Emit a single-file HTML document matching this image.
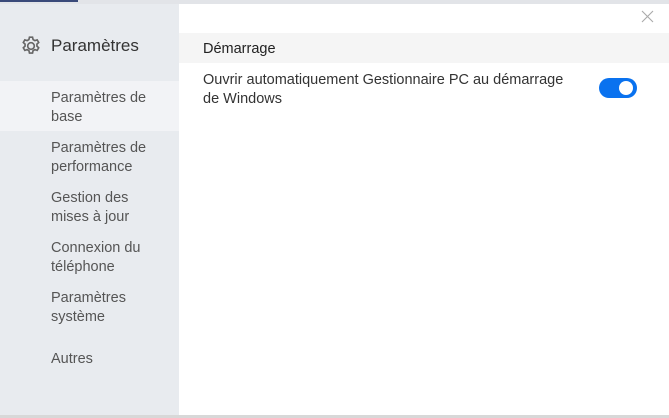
<!DOCTYPE html>
<html><head><meta charset="utf-8"><style>
*{margin:0;padding:0;box-sizing:border-box}
body{width:669px;height:418px;overflow:hidden;background:#fff;font-family:"Liberation Sans","DejaVu Sans",sans-serif;position:relative}
.top{position:absolute;left:0;top:0;width:669px;height:4px;background:#e2e4e8}
.top i{position:absolute;left:0;top:0;width:78px;height:2px;background:#3a4a7a}
.bot{position:absolute;left:0;top:415px;width:669px;height:3px;background:#d8d8d8}
.side{position:absolute;left:0;top:4px;width:179px;height:411px;background:#e8ebef}
.title{position:absolute;left:51px;top:36px;font-size:17px;color:#333}
.gear{position:absolute;left:20px;top:35px}
.item{position:absolute;left:51px;font-size:14.5px;line-height:19px;color:#555;white-space:nowrap}
.act{position:absolute;left:0;top:81px;width:179px;height:50px;background:#f2f3f6}
.hdr{position:absolute;left:179px;top:33px;width:490px;height:30px;background:#f5f5f5}
.hdr span{position:absolute;left:24px;top:8px;font-size:14.5px;color:#222}
.txt{position:absolute;left:203px;top:71px;font-size:14.5px;line-height:19px;color:#333;white-space:nowrap}
.tog{position:absolute;left:599px;top:78px;width:38px;height:20px;border-radius:10px;background:#0a72ef}
.tog i{position:absolute;right:4px;top:3px;width:14px;height:14px;border-radius:50%;background:#fff}
.x{position:absolute;left:641px;top:10px}
</style></head><body>
<div class="top"><i></i></div>
<div class="side"></div>
<div class="act"></div>
<svg class="gear" width="22" height="22" viewBox="0 0 20 20"><g fill="none" stroke="#666" stroke-width="1.5"><circle cx="10" cy="10" r="3"/><path d="M8.6 2h2.8l.5 2.2 1.6.9 2.1-.7 1.4 2.4-1.6 1.5v1.8l1.6 1.5-1.4 2.4-2.1-.7-1.6.9-.5 2.2H8.6l-.5-2.2-1.6-.9-2.1.7-1.4-2.4 1.6-1.5V8.3L3 6.8l1.4-2.4 2.1.7 1.6-.9z"/></g></svg>
<div class="title">Paramètres</div>
<div class="item" style="top:89px">Paramètres de<br>base</div>
<div class="item" style="top:139px">Paramètres de<br>performance</div>
<div class="item" style="top:189px">Gestion des<br>mises à jour</div>
<div class="item" style="top:239px">Connexion du<br>téléphone</div>
<div class="item" style="top:289px">Paramètres<br>système</div>
<div class="item" style="top:350px">Autres</div>
<div class="hdr"><span>Démarrage</span></div>
<div class="txt">Ouvrir automatiquement Gestionnaire PC au démarrage<br>de Windows</div>
<div class="tog"><i></i></div>
<svg class="x" width="13" height="13" viewBox="0 0 13 13"><path d="M1 1L12 12M12 1L1 12" stroke="#aaa" stroke-width="1.1"/></svg>
<div class="bot"></div>
</body></html>
